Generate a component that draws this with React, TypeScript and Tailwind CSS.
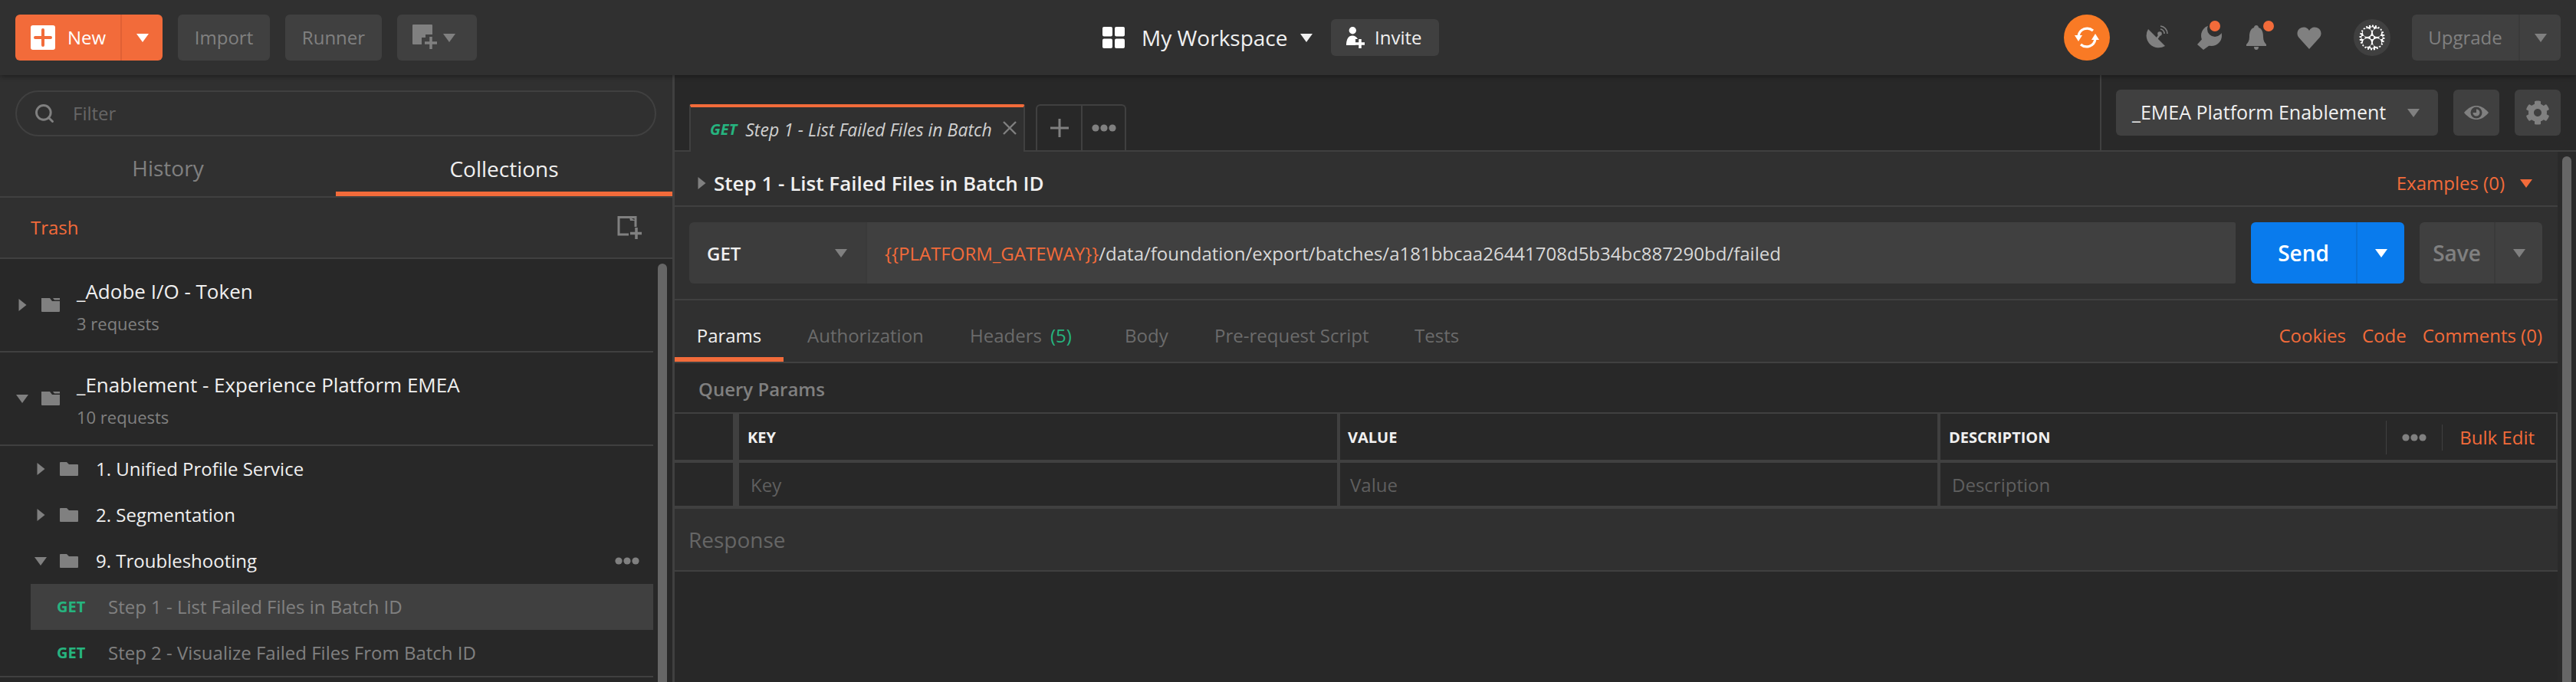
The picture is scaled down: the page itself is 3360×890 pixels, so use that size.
import { FaCog } from "react-icons/fa";
import { Search } from "lucide-react";

function Caret({ dir = "down", color = "#808080", w = 16, h = 11 }: { dir?: "down" | "right"; color?: string; w?: number; h?: number }) {
  if (dir === "right") {
    return (
      <svg width={h} height={w} viewBox="0 0 10 16" className="shrink-0">
        <path d="M0 0 L10 8 L0 16 Z" fill={color} />
      </svg>
    );
  }
  return (
    <svg width={w} height={h} viewBox="0 0 16 11" className="shrink-0">
      <path d="M0 0 H16 L8 11 Z" fill={color} />
    </svg>
  );
}

function Dots({ color = "#808080" }: { color?: string }) {
  return (
    <svg width="32" height="10" viewBox="0 0 32 10" className="shrink-0">
      <circle cx="5" cy="5" r="4.6" fill={color} />
      <circle cx="16" cy="5" r="4.6" fill={color} />
      <circle cx="27" cy="5" r="4.6" fill={color} />
    </svg>
  );
}

function Folder({ kind = "folder" }: { kind?: "folder" | "collection" }) {
  return (
    <svg width="24" height="18" viewBox="0 0 24 18" className="shrink-0">
      {kind === "folder" ? (
        <path d="M0 1 a1 1 0 0 1 1-1 H9 L12 3 H23 a1 1 0 0 1 1 1 V17 a1 1 0 0 1-1 1 H1 a1 1 0 0 1-1-1 Z" fill="#808080" />
      ) : (
        <path d="M0 0 H11 L14 4 H24 V17 a1 1 0 0 1-1 1 H1 a1 1 0 0 1-1-1 Z M15 0 H24 V2.5 H17 Z" fill="#808080" fillRule="evenodd" />
      )}
    </svg>
  );
}

function Collection({ open, name, count }: { open: boolean; name: string; count: string }) {
  return (
    <div className="flex h-[120px] items-center border-b-2 border-[#404040] box-content">
      <div className="flex w-[54px] justify-center pl-[4px] shrink-0">
        {open ? <Caret /> : <Caret dir="right" />}
      </div>
      <Folder kind="collection" />
      <div className="ml-[22px] pt-[6px]">
        <div className="text-[26px] leading-[42px] text-[#f0f0f0]">{name}</div>
        <div className="text-[22px] leading-[42px] text-[#808080]">{count}</div>
      </div>
    </div>
  );
}

function FolderRow({ open, name, more }: { open: boolean; name: string; more?: boolean }) {
  return (
    <div className="flex h-[60px] items-center pr-[18px]">
      <div className="flex w-[78px] justify-center pl-[28px] shrink-0">
        {open ? <Caret /> : <Caret dir="right" />}
      </div>
      <Folder />
      <div className="ml-[23px] flex-1 text-[24px] text-[#f0f0f0]">{name}</div>
      {more && <Dots />}
    </div>
  );
}

function RequestRow({ name, active }: { name: string; active?: boolean }) {
  return (
    <div className={`ml-[40px] flex h-[60px] items-center pl-[34px] ${active ? "bg-[#404040]" : ""}`}>
      <div className="w-[67px] text-[20px] font-bold text-[#26b47f]">GET</div>
      <div className="text-[24px] text-[#808080]">{name}</div>
    </div>
  );
}

function Sidebar() {
  return (
    <aside className="flex w-[880px] shrink-0 flex-col border-r-[3px] border-[#404040] bg-[#303030]">
      <div className="px-[20px] pt-[20px] pr-[21px]">
        <div className="flex h-[60px] items-center rounded-full border-2 border-[#404040] pl-[22px]">
          <Search size={28} color="#808080" strokeWidth={2.5} />
          <span className="ml-[23px] text-[24px] text-[#666666]">Filter</span>
        </div>
      </div>

      <div className="flex h-[78px] border-b-2 border-[#404040] box-content">
        <div className="flex w-[438px] items-center justify-center pt-[4px] text-[28px] text-[#808080]">History</div>
        <div className="flex flex-1 items-center justify-center border-b-[6px] border-[#f26b3a] pt-[12px] text-[28px] text-[#f0f0f0]">Collections</div>
      </div>

      <div className="flex h-[78px] items-center justify-between border-b-2 border-[#404040] pl-[40px] pr-[40px] box-content">
        <span className="text-[24px] text-[#f26b3a]">Trash</span>
        <svg width="32" height="30" viewBox="0 0 32 30" fill="none">
          <path d="M24 14 V1.5 H2 V24 H15" stroke="#808080" strokeWidth="3" />
          <path d="M16 1.5 L24 6 H17 Z" fill="#808080" />
          <path d="M25 15 V30 M17 22.5 H32" stroke="#808080" strokeWidth="3.5" />
        </svg>
      </div>

      <div className="flex min-h-0 flex-1 bg-[#282828]">
        <div className="w-[852px] shrink-0">
          <Collection open={false} name="_Adobe I/O - Token" count="3 requests" />
          <Collection open name="_Enablement - Experience Platform EMEA" count="10 requests" />
          <FolderRow open={false} name="1. Unified Profile Service" />
          <FolderRow open={false} name="2. Segmentation" />
          <FolderRow open name="9. Troubleshooting" more />
          <RequestRow active name="Step 1 - List Failed Files in Batch ID" />
          <RequestRow name="Step 2 - Visualize Failed Files From Batch ID" />
          <div className="h-[2px] bg-[#404040]" />
        </div>
        <div className="ml-[6px] mt-[6px] w-[12px] rounded-t-full bg-[#666666]" />
      </div>
    </aside>
  );
}

function Header() {
  return (
    <header className="relative z-10 flex h-[98px] shrink-0 items-center bg-[#303030] pl-[20px] pr-[20px] shadow-[0_2px_6px_rgba(0,0,0,0.35)]">
      <div className="flex h-[60px] w-[192px] rounded-[6px] bg-[#f26b3a]">
        <div className="flex w-[139px] items-center border-r-2 border-[#e06035] pl-[20px]">
          <svg width="32" height="32" viewBox="0 0 32 32" className="shrink-0">
            <rect width="32" height="32" rx="3" fill="#ffffff" />
            <path d="M16 6 V26 M6 16 H26" stroke="#f26b3a" strokeWidth="4" strokeLinecap="round" />
          </svg>
          <span className="ml-[16px] text-[24px] text-white">New</span>
        </div>
        <div className="flex flex-1 items-center justify-center"><Caret color="#ffffff" /></div>
      </div>

      <div className="ml-[20px] flex h-[60px] w-[120px] items-center justify-center rounded-[6px] bg-[#404040] text-[24px] text-[#808080]">Import</div>
      <div className="ml-[20px] flex h-[60px] w-[126px] items-center justify-center rounded-[6px] bg-[#404040] text-[24px] text-[#808080]">Runner</div>
      <div className="ml-[20px] flex h-[60px] w-[104px] items-center rounded-[6px] bg-[#404040] pl-[20px]">
        <svg width="34" height="34" viewBox="0 0 34 34" className="shrink-0">
          <path d="M1 0 H25 a1 1 0 0 1 1 1 V13 H17 V17 H12 V26 H1 a1 1 0 0 1-1-1 V1 a1 1 0 0 1 1-1 Z" fill="#808080" />
          <path d="M24 16 V32 M16 24 H32" stroke="#808080" strokeWidth="3.5" />
        </svg>
        <div className="ml-[6px]"><Caret /></div>
      </div>

      <svg width="29" height="28" viewBox="0 0 29 28" className="ml-[816px] shrink-0">
        <rect width="13" height="12.5" rx="2" fill="#ffffff" />
        <rect x="16" width="13" height="12.5" rx="2" fill="#ffffff" />
        <rect y="15.5" width="13" height="12.5" rx="2" fill="#ffffff" />
        <rect x="16" y="15.5" width="13" height="12.5" rx="2" fill="#ffffff" />
      </svg>
      <span className="ml-[22px] w-[188px] shrink-0 whitespace-nowrap text-[28px] text-[#f0f0f0]">My Workspace</span>
      <div className="ml-[19px]"><Caret color="#f0f0f0" /></div>
      <div className="ml-[24px] flex h-[48px] w-[141px] items-center rounded-[6px] bg-[#404040] pl-[20px]">
        <svg width="24" height="28" viewBox="0 0 24 28" className="shrink-0">
          <circle cx="8.3" cy="4.7" r="4.7" fill="#ffffff" />
          <path d="M0 24 C0 16 3 11.5 8 11.5 C11 11.5 13.5 13 15 16 H12 V24 Z" fill="#ffffff" />
          <path d="M18 16 V28 M12 22 H24" stroke="#ffffff" strokeWidth="3.5" />
        </svg>
        <span className="ml-[13px] text-[24px] text-[#f0f0f0]">Invite</span>
      </div>

      <div className="ml-[815px] flex h-[60px] w-[60px] shrink-0 items-center justify-center rounded-full bg-[#f97a25]">
        <svg width="32" height="28" viewBox="0 0 32 28" fill="none">
          <path d="M5 12 A11.5 11.5 0 0 1 24 5" stroke="#ffffff" strokeWidth="3.2" />
          <path d="M27 16 A11.5 11.5 0 0 1 8 23" stroke="#ffffff" strokeWidth="3.2" />
          <path d="M0 11 H10 L5 19 Z" fill="#ffffff" />
          <path d="M22 17 H32 L27 9 Z" fill="#ffffff" />
        </svg>
      </div>

      <svg width="32" height="32" viewBox="0 0 32 32" fill="none" className="ml-[44px] shrink-0">
        <path d="M6 5 L28 27 A16 16 0 0 1 6 5 Z" fill="#808080" />
        <path d="M17 18 L21 12" stroke="#808080" strokeWidth="2.5" />
        <circle cx="21" cy="11" r="2.8" fill="#808080" />
        <path d="M22 5 A6 6 0 0 1 27 11 M22 1 A10 10 0 0 1 31 11" stroke="#808080" strokeWidth="1.6" />
      </svg>

      {/* wrench: blob head with a jaw bitten out, the badge sits in the jaw */}
      <div className="relative ml-[38px] h-[32px] w-[32px]">
        <svg width="32" height="32" viewBox="0 0 32 32">
          <circle cx="18.5" cy="13.5" r="13.5" fill="#808080" />
          <path d="M0 25 L9 15 L19 24 L8 32 Z" fill="#808080" />
          <circle cx="23" cy="5" r="10" fill="#303030" />
        </svg>
        <div className="absolute left-[16px] top-[-6px] h-[14px] w-[14px] rounded-full bg-[#f26b3a]" />
      </div>
      <div className="relative ml-[32px] h-[32px] w-[26px]">
        <svg width="26" height="32" viewBox="0 0 26 32">
          <path d="M13 0 C15 0 16 1.5 16 3 C21 4.5 22 10 22 15 C22 20 24 23 26 25 V27 H0 V25 C2 23 4 20 4 15 C4 10 5 4.5 10 3 C10 1.5 11 0 13 0 Z M10 28 H16 C16 30.5 15 32 13 32 C11 32 10 30.5 10 28 Z" fill="#808080" />
        </svg>
        <div className="absolute left-[22px] top-[-6px] h-[14px] w-[14px] rounded-full bg-[#f26b3a]" />
      </div>
      <svg width="32" height="30" viewBox="0 0 32 30" className="ml-[40px] shrink-0">
        <path d="M16 30 L2.5 15 C-1 11 0 4 6 2 C10 0.5 14 2 16 6 C18 2 22 0.5 26 2 C32 4 33 11 29.5 15 Z" fill="#808080" />
      </svg>

      <div className="ml-[42px] flex h-[48px] w-[48px] shrink-0 items-center justify-center rounded-full bg-[#404040]">
        <svg width="34" height="34" viewBox="0 0 34 34">
          <circle cx="17" cy="17" r="15" fill="none" stroke="#ffffff" strokeWidth="3" strokeDasharray="2 1.9" />
          <circle cx="17" cy="17" r="14.5" fill="#ffffff" />
          <circle cx="10.5" cy="10.5" r="5.6" fill="#404040" />
          <circle cx="23.5" cy="10.5" r="5.6" fill="#404040" />
          <circle cx="10.5" cy="23.5" r="5.6" fill="#404040" />
          <circle cx="23.5" cy="23.5" r="5.6" fill="#404040" />
          <circle cx="17" cy="5.5" r="2.3" fill="#404040" />
          <circle cx="17" cy="28.5" r="2.3" fill="#404040" />
          <circle cx="5.5" cy="17" r="2.3" fill="#404040" />
          <circle cx="28.5" cy="17" r="2.3" fill="#404040" />
          <circle cx="17" cy="17" r="2.3" fill="#404040" />
        </svg>
      </div>

      <div className="ml-[28px] flex h-[60px] w-[194px] rounded-[6px] bg-[#404040]">
        <div className="flex w-[141px] items-center justify-center border-r-2 border-[#3a3a3a] text-[24px] text-[#808080]">Upgrade</div>
        <div className="flex flex-1 items-center justify-center"><Caret /></div>
      </div>
    </header>
  );
}

function TabBar() {
  return (
    <div className="flex h-[100px] shrink-0 bg-[#282828]">
      <div className="flex flex-1 items-end border-b-2 border-[#404040] pl-[19px] pt-[40px]">
        <div className="mb-[-2px] flex h-[62px] w-[438px] items-center rounded-t-[3px] border-x-2 border-t-4 border-x-[#404040] border-t-[#f26b3a] bg-[#303030] pl-[25px] italic">
          <span className="text-[20px] font-bold text-[#26b47f]">GET</span>
          <span className="ml-[11px] w-[324px] shrink-0 whitespace-nowrap text-[23px] text-[#d0d0d0]">Step 1 - List Failed Files in Batch</span>
          <svg width="20" height="20" viewBox="0 0 20 20" fill="none" className="ml-[11px] mb-[4px] shrink-0">
            <path d="M2 2 L18 18 M18 2 L2 18" stroke="#808080" strokeWidth="2.4" />
          </svg>
        </div>
        <div className="ml-[14px] flex h-[60px] w-[118px] rounded-t-[6px] border-x-2 border-t-2 border-[#404040]">
          <div className="flex w-[59px] items-center justify-center border-r-2 border-[#404040]">
            <svg width="24" height="24" viewBox="0 0 24 24"><path d="M12 0 V24 M0 12 H24" stroke="#808080" strokeWidth="3" /></svg>
          </div>
          <div className="flex flex-1 items-center justify-center"><Dots /></div>
        </div>
      </div>
      <div className="flex w-[621px] shrink-0 items-center border-b-2 border-l-2 border-[#404040] bg-[#292929] pl-[19px]">
        <div className="flex h-[60px] w-[420px] items-center justify-between rounded-[6px] bg-[#404040] pl-[21px] pr-[24px]">
          <span className="text-[25px] font-medium text-[#f0f0f0]">_EMEA Platform Enablement</span>
          <Caret />
        </div>
        <div className="ml-[20px] flex h-[60px] w-[60px] items-center justify-center rounded-[6px] bg-[#404040]">
          <svg width="32" height="18" viewBox="0 0 32 18">
            <path d="M0 9 C6 2 11 0 16 0 C21 0 26 2 32 9 C26 16 21 18 16 18 C11 18 6 16 0 9 Z" fill="#808080" />
            <circle cx="16" cy="9" r="7.5" fill="#404040" />
            <path d="M16 4.5 A4.5 4.5 0 1 1 11.5 9 L16 9 Z" fill="#808080" />
          </svg>
        </div>
        <div className="ml-[20px] flex h-[60px] w-[60px] items-center justify-center rounded-[6px] bg-[#404040]">
          <FaCog size={32} color="#808080" />
        </div>
      </div>
    </div>
  );
}

function ParamsTabs() {
  return (
    <div className="flex h-[80px] items-center border-b-2 border-[#404040] box-content pr-[20px] text-[24px]">
      <div className="flex h-[80px] w-[142px] items-center justify-center border-b-[6px] border-[#f26b3a] pt-[18px] text-[#f0f0f0]">Params</div>
      <div className="ml-[31px] w-[212px] pt-[12px] text-[#6b6b6b]">Authorization</div>
      <div className="w-[202px] pt-[12px] text-[#6b6b6b]">
        Headers<span className="ml-[11px] text-[#26b47f]">(5)</span>
      </div>
      <div className="w-[117px] pt-[12px] text-[#6b6b6b]">Body</div>
      <div className="w-[261px] pt-[12px] text-[#6b6b6b]">Pre-request Script</div>
      <div className="pt-[12px] text-[#6b6b6b]">Tests</div>
      <div className="ml-auto flex gap-[21px] pt-[12px] text-[#f26b3a]">
        <span>Cookies</span>
        <span>Code</span>
        <span>Comments (0)</span>
      </div>
    </div>
  );
}

function ParamsTable() {
  return (
    <div className="border-r-2 border-t-2 border-[#404040]">
      <div className="flex h-[64px] border-b-4 border-[#404040]">
        <div className="w-[84px] shrink-0 border-r-[8px] border-[#404040]" />
        <div className="flex w-[784px] shrink-0 items-center border-r-4 border-[#404040] pl-[11px] pt-[2px] text-[20px] font-bold text-[#f0f0f0]">KEY</div>
        <div className="flex w-[783px] shrink-0 items-center border-r-4 border-[#404040] pl-[10px] pt-[2px] text-[20px] font-bold text-[#f0f0f0]">VALUE</div>
        <div className="flex flex-1 items-center pl-[11px] pt-[2px]">
          <span className="flex-1 text-[20px] font-bold text-[#f0f0f0]">DESCRIPTION</span>
          <div className="h-[44px] w-[1px] bg-[#404040]" />
          <div className="mx-[20px]"><Dots /></div>
          <div className="h-[34px] w-[1px] bg-[#404040]" />
          <span className="ml-[22px] mr-[28px] text-[24px] text-[#f26b3a]">Bulk Edit</span>
        </div>
      </div>
      <div className="flex h-[60px] border-b-4 border-[#404040] text-[24px] text-[#5f5f5f]">
        <div className="w-[84px] shrink-0 border-r-[8px] border-[#404040]" />
        <div className="flex w-[784px] shrink-0 items-center border-r-4 border-[#404040] pl-[15px] pt-[1px]">Key</div>
        <div className="flex w-[783px] shrink-0 items-center border-r-4 border-[#404040] pl-[13px] pt-[1px]">Value</div>
        <div className="flex flex-1 items-center pl-[15px] pt-[1px]">Description</div>
      </div>
    </div>
  );
}

export default function App() {
  return (
    <div className="flex h-[890px] w-[3360px] flex-col overflow-hidden bg-[#282828] font-['Open_Sans',sans-serif]">
      <Header />
      <div className="flex min-h-0 flex-1">
        <Sidebar />
        <main className="flex min-w-0 flex-1 flex-col">
          <TabBar />
          <div className="flex min-h-0 flex-1">
            <div className="w-[2456px] shrink-0">
              <div className="bg-[#303030]">
                <div className="flex h-[58px] items-center justify-between border-b-2 border-[#404040] pl-[30px] pr-[33px] pt-[12px] box-content">
                  <div className="flex items-center">
                    <Caret dir="right" />
                    <span className="ml-[10px] text-[26px] font-semibold text-[#f0f0f0]">Step 1 - List Failed Files in Batch ID</span>
                  </div>
                  <div className="flex items-center">
                    <span className="text-[24px] text-[#f26b3a]">Examples (0)</span>
                    <div className="ml-[20px]"><Caret color="#f26b3a" /></div>
                  </div>
                </div>

                <div className="flex h-[120px] items-center border-b-2 border-[#404040] pl-[19px] pr-[20px] box-content">
                  <div className="flex h-[80px] w-[232px] items-center justify-between rounded-l-[6px] border-r-2 border-[#3a3a3a] bg-[#3c3c3c] pl-[23px] pr-[24px]">
                    <span className="pt-[2px] text-[24px] font-semibold text-[#f0f0f0]">GET</span>
                    <Caret />
                  </div>
                  <div className="flex h-[80px] w-[1785px] items-center rounded-r-[2px] bg-[#404040] pl-[23px] pt-[2px] text-[24px]">
                    <span className="text-[#f26b3a]">{"{{PLATFORM_GATEWAY}}"}</span>
                    <span className="text-[#d8d8d8]">/data/foundation/export/batches/a181bbcaa26441708d5b34bc887290bd/failed</span>
                  </div>
                  <div className="ml-[20px] flex h-[80px] w-[200px] rounded-[6px] bg-[#097bed]">
                    <div className="flex w-[139px] items-center justify-center border-r-2 border-[#0a6fd4] text-[28px] font-semibold text-white">Send</div>
                    <div className="flex flex-1 items-center justify-center"><Caret color="#ffffff" /></div>
                  </div>
                  <div className="ml-[20px] flex h-[80px] w-[160px] rounded-[6px] bg-[#404040]">
                    <div className="flex w-[99px] items-center justify-center border-r-2 border-[#3a3a3a] text-[28px] font-semibold text-[#808080]">Save</div>
                    <div className="flex flex-1 items-center justify-center"><Caret /></div>
                  </div>
                </div>

                <ParamsTabs />
              </div>

              <div className="bg-[#282828]">
                <div className="flex h-[64px] items-center pl-[31px] pt-[4px] text-[24px] font-semibold text-[#808080]">Query Params</div>
                <ParamsTable />
              </div>

              <div className="flex h-[80px] items-center border-b-2 border-[#404040] bg-[#303030] pl-[18px] text-[28px] text-[#666666] box-content">Response</div>
            </div>
            <div className="w-[24px] shrink-0 bg-[#2a2a2a]">
              <div className="ml-[6px] mt-[6px] h-full w-[12px] rounded-t-full bg-[#666666]" />
            </div>
          </div>
        </main>
      </div>
    </div>
  );
}
